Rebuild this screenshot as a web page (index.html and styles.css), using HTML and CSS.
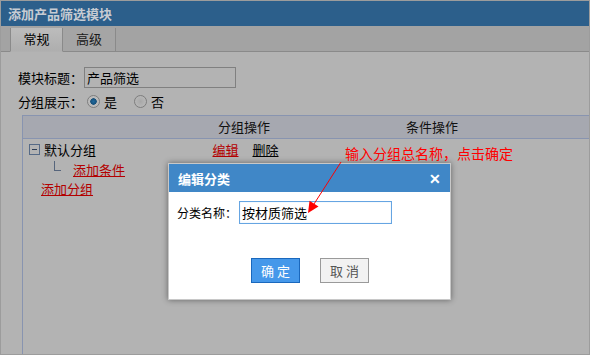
FILE: index.html
```html
<!DOCTYPE html>
<html lang="zh">
<head>
<meta charset="utf-8">
<title>添加产品筛选模块</title>
<link rel="stylesheet" href="styles.css">
</head>
<body>
<div class="frame">
  <div class="titlebar">添加产品筛选模块</div>
  <div class="tabs">
    <div class="tab active">常规</div>
    <div class="tab">高级</div>
  </div>
  <div class="content">
    <div class="field">
      <span class="label">模块标题：</span>
      <div class="input">产品筛选</div>
    </div>
    <div class="field field-radio">
      <span class="label">分组展示：</span>
      <span class="radio checked"></span><span class="radio-text">是</span>
      <span class="radio"></span><span class="radio-text">否</span>
    </div>
    <div class="table">
      <div class="thead">
        <div class="th c1"></div>
        <div class="th c2">分组操作</div>
        <div class="th c3">条件操作</div>
        <div class="th c4"></div>
      </div>
      <div class="tbody">
        <div class="row row-group">
          <div class="c1 group-name"><span class="minus"></span><span>默认分组</span></div>
          <div class="c2 ops"><a class="link red">编辑</a><a class="link black">删除</a></div>
        </div>
        <div class="row row-cond">
          <span class="tree-line"></span><a class="link red">添加条件</a>
        </div>
        <div class="row row-add">
          <a class="link red">添加分组</a>
        </div>
      </div>
    </div>
  </div>

  <div class="dialog">
    <div class="dialog-head">
      <span class="dialog-title">编辑分类</span>
      <span class="dialog-close">✕</span>
    </div>
    <div class="dialog-body">
      <div class="dialog-field">
        <span class="dialog-label">分类名称：</span>
        <div class="dialog-input">按材质筛选</div>
      </div>
      <div class="dialog-buttons">
        <div class="btn btn-primary">确 定</div>
        <div class="btn btn-default">取 消</div>
      </div>
    </div>
  </div>

  <div class="note">输入分组总名称，点击确定</div>
  <svg class="arrow" width="590" height="355" viewBox="0 0 590 355">
    <line x1="341" y1="162" x2="314" y2="204" stroke="#ff0000" stroke-width="1"/>
    <polygon points="308,213 318.5,206.5 309.5,200.8" fill="#ff0000"/>
  </svg>
</div>
</body>
</html>
```

FILE: styles.css
```css
* { box-sizing: border-box; }
html, body { margin: 0; padding: 0; }
body {
  width: 590px;
  height: 355px;
  overflow: hidden;
  font-family: "Noto Sans CJK SC", "Liberation Sans", sans-serif;
  font-size: 13px;
  color: #000;
  background: #b3b3b3;
}
.frame {
  position: relative;
  width: 590px;
  height: 355px;
  border: 1px solid #9c9c9c;
  display: flex;
  flex-direction: column;
  background: #b3b3b3;
}
.titlebar {
  height: 25px;
  background: #2c5f8b;
  color: #c7ccd3;
  font-weight: bold;
  font-size: 13px;
  line-height: 25px;
  padding-left: 7px;
  flex: none;
}
.tabs {
  height: 26px;
  background: #a3a3a3;
  border-bottom: 1px solid #8a8a8a;
  display: flex;
  align-items: flex-end;
  padding-left: 9px;
  flex: none;
}
.tab {
  height: 24px;
  line-height: 22px;
  width: 53px;
  text-align: center;
  color: #1a1a1a;
  border-right: 1px solid #8a8a8a;
  background: #a5a5a5;
  margin-bottom: -1px;
  border-bottom: 1px solid #8a8a8a;
}
.tab.active {
  border-left: 1px solid #8a8a8a;
  background: linear-gradient(#bcbcbc, #aeaeae);
  border-bottom: 1px solid #b0b0b0;
  color: #000;
}
.content {
  flex: 1;
  display: flex;
  flex-direction: column;
  padding: 15px 0 0 17px;
}
.field {
  display: flex;
  align-items: center;
  height: 21px;
}
.label {
  width: 66px;
  line-height: 21px;
  white-space: nowrap;
}
.input {
  width: 152px;
  height: 21px;
  border: 1px solid #808080;
  line-height: 19px;
  padding-left: 2px;
}
.field-radio {
  margin-top: 3px;
  height: 20px;
}
.radio {
  width: 13px;
  height: 13px;
  border-radius: 50%;
  border: 1px solid #7d7d7d;
  background: radial-gradient(circle, #a8a8a8 0, #bdbdbd 100%);
  margin-left: 3px;
  position: relative;
}
.radio.checked {
  background: radial-gradient(circle, #1f6a9e 0, #17507a 38%, #b8b8b8 45%, #c2c2c2 100%);
}
.radio-text {
  margin-left: 4px;
  width: 27px;
}
.table {
  flex: 1;
  margin-top: 4px;
  margin-left: 4px;
  border-left: 1px solid #8894b0;
  display: flex;
  flex-direction: column;
}
.thead {
  display: flex;
  height: 24px;
  border-top: 1px solid #8894b0;
  border-bottom: 1px solid #8894b0;
  background: #a6a8b0;
}
.th {
  line-height: 22px;
  text-align: center;
  color: #111;
}
.c1 { width: 127px; }
.c2 { width: 188px; }
.c3 { width: 188px; }
.c4 { flex: 1; }
.tbody { flex: 1; }
.row {
  height: 20px;
  display: flex;
  align-items: center;
}
.group-name {
  display: flex;
  align-items: center;
  padding-left: 6px;
}
.minus {
  width: 11px;
  height: 11px;
  border: 1px solid #566a86;
  position: relative;
  margin-right: 4px;
}
.minus::after {
  content: "";
  position: absolute;
  left: 2px;
  right: 2px;
  top: 4px;
  height: 1px;
  background: #2d3d55;
}
.ops {
  display: flex;
  justify-content: center;
  gap: 14px;
  padding-left: 3px;
}
.link {
  text-decoration: underline;
  cursor: pointer;
}
.red { color: #b30000; }
.black { color: #000; }
.row-cond {
  padding-left: 31px;
}
.tree-line {
  width: 7px;
  height: 10px;
  border-left: 1px solid #56657c;
  border-bottom: 1px solid #56657c;
  margin-right: 12px;
  margin-top: -6px;
}
.row-add {
  padding-left: 18px;
  height: 19px;
}

/* dialog overlay */
.dialog {
  position: absolute;
  left: 167px;
  top: 162px;
  width: 283px;
  height: 137px;
  background: #fff;
  border: 1px solid #c8c8c8;
  box-shadow: 0 0 6px rgba(0, 0, 0, 0.45);
  display: flex;
  flex-direction: column;
}
.dialog-head {
  height: 28px;
  background: #4087c7;
  display: flex;
  align-items: center;
  justify-content: space-between;
  padding: 0 9px 0 9px;
  flex: none;
}
.dialog-title {
  color: #fff;
  font-weight: bold;
  font-size: 13px;
}
.dialog-close {
  color: #fff;
  font-weight: bold;
  font-size: 14px;
  line-height: 14px;
}
.dialog-body {
  flex: 1;
  padding: 9px 0 0 8px;
  display: flex;
  flex-direction: column;
}
.dialog-field {
  display: flex;
  align-items: center;
  height: 23px;
}
.dialog-label {
  font-size: 12px;
  width: 62px;
  white-space: nowrap;
}
.dialog-input {
  width: 153px;
  height: 23px;
  border: 1px solid #66a5e2;
  box-shadow: inset 0 0 1px #9cc6ef;
  line-height: 21px;
  padding-left: 2px;
  font-size: 13px;
}
.dialog-buttons {
  display: flex;
  gap: 20px;
  margin-top: 34px;
  padding-left: 74px;
}
.btn {
  width: 49px;
  height: 25px;
  line-height: 23px;
  text-align: center;
  font-size: 13px;
}
.btn-primary {
  background: #4598ea;
  border: 1px solid #1a68bd;
  color: #fff;
}
.btn-default {
  background: #f2f2f2;
  border: 1px solid #9a9a9a;
  color: #555;
}
.note {
  position: absolute;
  left: 344px;
  top: 144px;
  font-size: 14px;
  line-height: 17px;
  color: #ff0000;
  white-space: nowrap;
}
.arrow {
  position: absolute;
  left: -1px;
  top: -1px;
  pointer-events: none;
}
```
